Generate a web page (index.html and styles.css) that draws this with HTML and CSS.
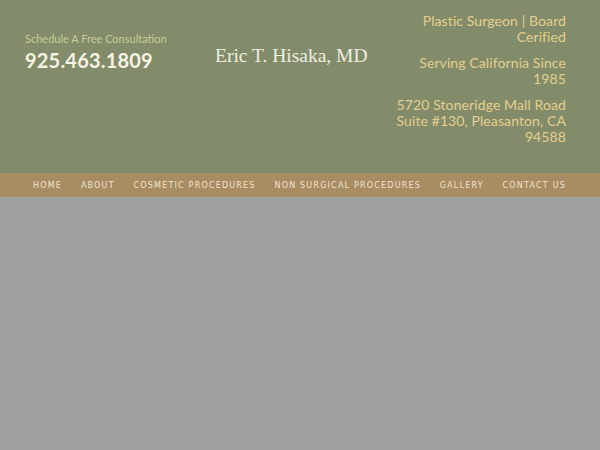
FILE: index.html
```html
<!DOCTYPE html>
<html>
<head>
<meta charset="utf-8">
<link rel="stylesheet" href="styles.css">
</head>
<body>
<header class="header">
  <div class="contact">
    <div class="schedule">Schedule A Free Consultation</div>
    <div class="phone">925.463.1809</div>
  </div>
  <div class="brand">Eric T. Hisaka, MD</div>
  <div class="info">
    <p>Plastic Surgeon | Board<br>Cerified</p>
    <p>Serving California Since<br>1985</p>
    <p>5720 Stoneridge Mall Road<br>Suite #130, Pleasanton, CA<br>94588</p>
  </div>
</header>
<nav class="nav">
  <a>HOME</a>
  <a>ABOUT</a>
  <a>COSMETIC PROCEDURES</a>
  <a>NON SURGICAL PROCEDURES</a>
  <a>GALLERY</a>
  <a>CONTACT US</a>
</nav>
<main class="hero"></main>
</body>
</html>
```
FILE: styles.css
```css
html, body {
  margin: 0;
  padding: 0;
  height: 100%;
}
body {
  background: #a0a0a0;
  font-family: "Lato", "Open Sans", sans-serif;
  display: flex;
  flex-direction: column;
}
.header {
  background: #838c6a;
  height: 173px;
  box-sizing: border-box;
  padding: 13px 34px 0 25px;
  display: flex;
  align-items: flex-start;
}
.contact {
  width: 190px;
  padding-top: 19px;
}
.schedule {
  color: #c9cb98;
  font-size: 11px;
  line-height: 14px;
}
.phone {
  color: #f6f3e4;
  font-size: 20px;
  font-weight: 700;
  line-height: 24px;
  margin-top: 2px;
  letter-spacing: 0.2px;
}
.brand {
  font-family: "Liberation Serif", serif;
  color: #efeee0;
  font-size: 19.5px;
  line-height: 22px;
  margin-top: 32px;
}
.info {
  margin-left: auto;
  text-align: right;
  color: #e3cf8e;
  font-size: 14px;
  line-height: 16px;
  letter-spacing: 0.1px;
}
.info p {
  margin: 0 0 10px;
}
.nav {
  background: #a88c62;
  height: 24px;
  display: flex;
  align-items: center;
  justify-content: space-between;
  padding: 0 34px 0 33px;
}
.nav a {
  color: #efe4cf;
  font-family: "DejaVu Sans", sans-serif;
  font-size: 8px;
  letter-spacing: 1.2px;
}
.hero {
  flex: 1;
  background: #a0a0a0;
}
```
